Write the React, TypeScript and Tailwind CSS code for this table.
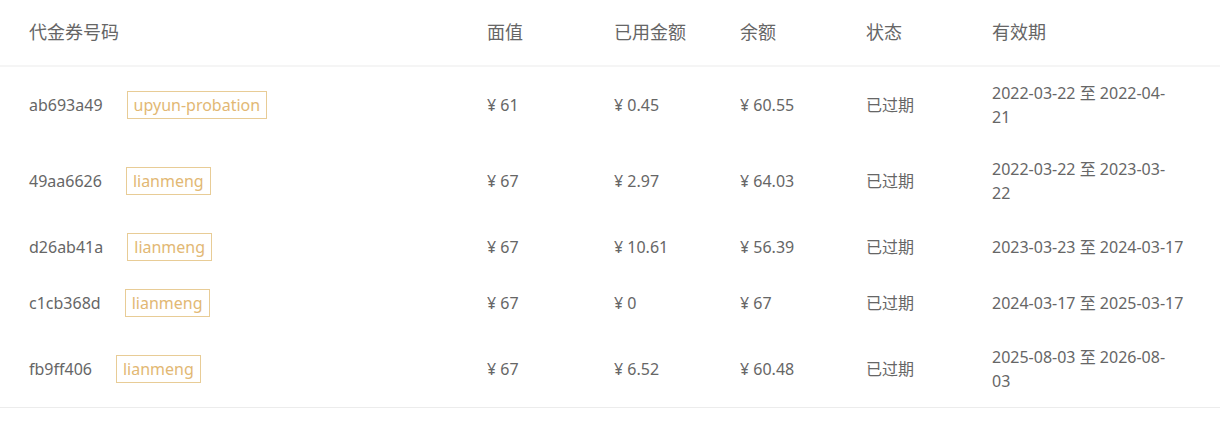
import React from 'react';

interface Voucher {
  code: string;
  tag: string;
  face: string;
  used: string;
  balance: string;
  status: string;
  period: string[];
}

// period lines are split the way the original column wraps them
const vouchers: Voucher[] = [
  { code: 'ab693a49', tag: 'upyun-probation', face: '61', used: '0.45', balance: '60.55', status: '已过期', period: ['2022-03-22 至 2022-04-', '21'] },
  { code: '49aa6626', tag: 'lianmeng', face: '67', used: '2.97', balance: '64.03', status: '已过期', period: ['2022-03-22 至 2023-03-', '22'] },
  { code: 'd26ab41a', tag: 'lianmeng', face: '67', used: '10.61', balance: '56.39', status: '已过期', period: ['2023-03-23 至 2024-03-17'] },
  { code: 'c1cb368d', tag: 'lianmeng', face: '67', used: '0', balance: '67', status: '已过期', period: ['2024-03-17 至 2025-03-17'] },
  { code: 'fb9ff406', tag: 'lianmeng', face: '67', used: '6.52', balance: '60.48', status: '已过期', period: ['2025-08-03 至 2026-08-', '03'] },
];

const font = { fontFamily: '"Noto Sans", "Noto Sans CJK SC", sans-serif' };

const VoucherTable: React.FC = () => {
  return (
    <div className="w-[1220px] h-[445px] bg-white text-[#666]" style={font}>
      <table className="w-full table-fixed border-collapse">
        <colgroup>
          <col className="w-[459px]" />
          <col className="w-[127px]" />
          <col className="w-[126px]" />
          <col className="w-[126px]" />
          <col className="w-[126px]" />
          <col />
        </colgroup>
        <thead>
          <tr className="border-b-2 border-[#f5f5f5] text-[18px] h-[66px] whitespace-nowrap">
            <th className="text-left font-normal pl-[29px] pr-7">代金券号码</th>
            <th className="text-left font-normal pl-7">面值</th>
            <th className="text-left font-normal pl-7">已用金额</th>
            <th className="text-left font-normal pl-7">余额</th>
            <th className="text-left font-normal pl-7">状态</th>
            <th className="text-left font-normal pl-7">有效期</th>
          </tr>
        </thead>
        <tbody className="text-[16px] leading-[24px]">
          {vouchers.map((v, i) => (
            <tr key={v.code} className={i === vouchers.length - 1 ? 'border-b border-[#ececec]' : ''}>
              <td className="pl-[29px] pr-7 py-[14px]">
                <div className="flex items-center gap-6">
                  <span>{v.code}</span>
                  <span className="border border-[#e8cc96] text-[#e2b874] px-[6px] h-[28px] leading-[26px] text-[16px]">
                    {v.tag}
                  </span>
                </div>
              </td>
              <td className="px-7">¥ {v.face}</td>
              <td className="px-7">¥ {v.used}</td>
              <td className="px-7">¥ {v.balance}</td>
              <td className="px-7">{v.status}</td>
              <td className="pl-7 pr-2 py-[14px] whitespace-nowrap">
                {v.period.map(line => (
                  <div key={line}>{line}</div>
                ))}
              </td>
            </tr>
          ))}
        </tbody>
      </table>
    </div>
  );
};

export default VoucherTable;
